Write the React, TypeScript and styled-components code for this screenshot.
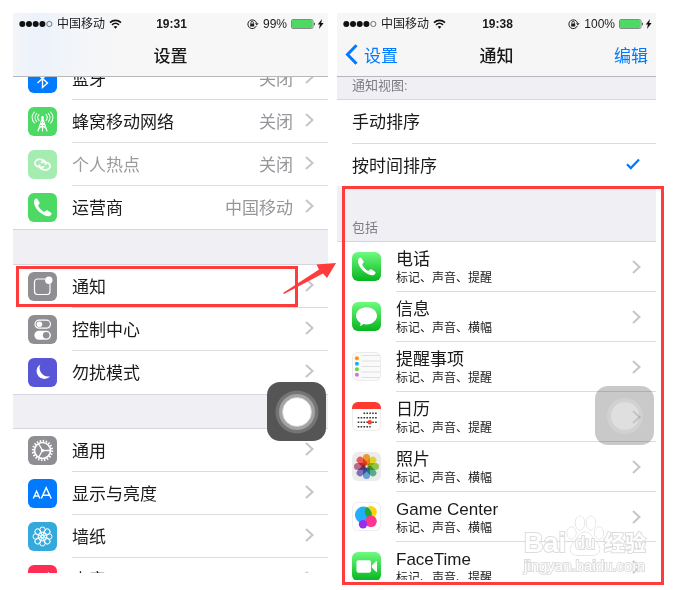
import React from "react";
import styled, { createGlobalStyle } from "styled-components";

const sans = `"Liberation Sans", "Noto Sans CJK SC", sans-serif`;
const blue = "#007aff";
const red = "#ff3b3b";

const GlobalStyle = createGlobalStyle`
  *, *::before, *::after { box-sizing: border-box; }
  body { margin: 0; background: #fff; font-family: ${sans}; color: #1a1a1a; }
  a { color: inherit; text-decoration: none; }
  button { font: inherit; border: 0; background: none; padding: 0; cursor: pointer; }
`;

const Page = styled.main`
  display: grid;
  grid-template-columns: 315fr 319fr;
  align-items: start;
  gap: 9px;
  padding: 13px 28px 5px 13px;
`;

const Phone = styled.section`
  position: relative;
  min-width: 0;
  background: #fff;
`;

const Header = styled.header<{ $tinted?: boolean }>`
  position: relative;
  z-index: 1;
  height: 64px;
  border-bottom: 1px solid #b8b8bc;
  background: ${(p) =>
    p.$tinted ? "linear-gradient(90deg, #f3f5f9 0, #ecf2fb 24px, #f3f5f9 60px, #f7f7f7 110px)" : "#f6f6f6"};
`;

const StatusBar = styled.div`
  display: grid;
  grid-template-columns: 1fr auto 1fr;
  align-items: center;
  height: 21px;
  padding: 0 4px 0 6px;
  font-size: 12px;
  line-height: 20px;
  white-space: nowrap;
`;

const StatusGroup = styled.div<{ $end?: boolean }>`
  display: flex;
  align-items: center;
  justify-content: ${(p) => (p.$end ? "flex-end" : "flex-start")};
  gap: 4px;
`;

const Clock = styled.time`
  font-weight: 700;
`;

const NavBar = styled.div`
  display: grid;
  grid-template-columns: 1fr auto 1fr;
  align-items: center;
  height: 40px;
  padding: 0 8px;
  font-size: 17px;
`;

const Title = styled.h1`
  grid-column: 2;
  margin: 0;
  font-size: 17px;
  font-weight: 500;
`;

const BackLink = styled.a`
  display: flex;
  align-items: center;
  gap: 6px;
  color: ${blue};
`;

const EditButton = styled.button`
  justify-self: end;
  color: ${blue};
`;

const Content = styled.div<{ $max: number }>`
  max-height: ${(p) => p.$max}px;
  overflow: hidden;
`;

const List = styled.ul<{ $scrolled?: boolean }>`
  list-style: none;
  margin: ${(p) => (p.$scrolled ? "-20px" : "0")} 0 0;
  padding: 0;
`;

const Item = styled.li`
  position: relative;
`;

const Row = styled.a<{ $dim?: boolean }>`
  display: flex;
  align-items: center;
  height: 43px;
  padding-left: 15px;
  gap: 15px;
  color: ${(p) => (p.$dim ? "#9b9b9f" : "#1a1a1a")};
  > svg { flex: none; }
`;

const RowBody = styled.span<{ $last?: boolean }>`
  flex: 1;
  display: flex;
  align-items: center;
  align-self: stretch;
  gap: 12px;
  padding: 0 14px 2px 0;
  border-bottom: 1px solid ${(p) => (p.$last ? "transparent" : "#dcdce0")};
  font-size: 17px;
`;

const Label = styled.span`
  flex: 1;
`;

const Value = styled.span`
  color: #96969b;
`;

const Gap = styled.div<{ $height: number }>`
  height: ${(p) => p.$height}px;
  background: #efeff4;
  border: solid #d6d6dc;
  border-width: 1px 0;
`;

const Heading = styled.h2<{ $height: number }>`
  display: flex;
  align-items: flex-end;
  height: ${(p) => p.$height}px;
  margin: 0;
  padding: 0 15px 5px;
  background: #efeff4;
  border-bottom: 1px solid #d6d6dc;
  color: #7c7c82;
  font-size: 13px;
  font-weight: 400;
  line-height: 16px;
`;

const Options = styled.fieldset`
  margin: 0;
  padding: 0 0 0 15px;
  border: 0;
`;

const Option = styled.label`
  display: flex;
  align-items: center;
  justify-content: space-between;
  height: 43px;
  padding: 0 16px 2px 0;
  font-size: 17px;
  & + & { border-top: 1px solid #dcdce0; }
  svg { visibility: hidden; }
  input:checked ~ svg { visibility: visible; }
`;

const HiddenRadio = styled.input`
  appearance: none;
  width: 0;
  height: 0;
  margin: 0;
`;

const AppRow = styled(Row)`
  height: 50px;
  > svg {
    align-self: flex-start;
    margin-top: 10px;
  }
`;

const AppBody = styled(RowBody)`
  padding: 0 15px 0 0;
`;

const AppText = styled.span`
  flex: 1;
  display: flex;
  flex-direction: column;
  padding-top: 3px;
  font-size: 17px;
  line-height: 20px;
`;

const Detail = styled.small`
  font-size: 12px;
  line-height: 16px;
`;

const RowHighlight = styled.span`
  position: absolute;
  inset: 1px 30px 1px 3px;
  border: 3px solid ${red};
  pointer-events: none;
`;

const SectionHighlight = styled.div`
  position: absolute;
  inset: 173px -8px -5px 5px;
  border: 3px solid ${red};
  pointer-events: none;
`;

const Arrow = styled.svg`
  position: absolute;
  z-index: 2;
  top: 249px;
  right: -9px;
`;

const Assistive = styled.button<{ $faded?: boolean }>`
  position: absolute;
  z-index: 2;
  top: ${(p) => (p.$faded ? 373 : 369)}px;
  right: 2px;
  display: grid;
  place-items: center;
  width: 59px;
  height: 59px;
  border-radius: 13px;
  background: ${(p) => (p.$faded ? "rgba(40,40,40,.25)" : "#555")};
`;

const Watermark = styled.div`
  position: absolute;
  right: 8px;
  bottom: 6px;
  width: 124px;
  color: #fff;
  -webkit-text-stroke: 2px #dadada;
  paint-order: stroke fill;
  opacity: .9;
  pointer-events: none;
`;

const Brand = styled.div`
  display: flex;
  align-items: flex-end;
  font-weight: 700;
  line-height: 28px;
`;

const BrandWord = styled.span<{ $small?: boolean }>`
  font-size: ${(p) => (p.$small ? 21 : 27)}px;
`;

const Paw = styled.span`
  display: grid;
  place-items: end center;
  width: 38px;
  height: 42px;
  font-size: 18px;
  font-weight: 400;
  > * { grid-area: 1 / 1; }
`;

const Site = styled.div`
  font-size: 15px;
  line-height: 17px;
`;

const Tile = ({ fill, children }: { fill: string; children?: React.ReactNode }) => (
  <svg width="29" height="29" viewBox="0 0 29 29" aria-hidden="true">
    <rect width="29" height="29" rx="6" fill={fill} />
    {children}
  </svg>
);

const Chevron = () => (
  <svg width="9" height="14" viewBox="0 0 9 14" fill="none" stroke="#c5c5ca" strokeWidth="2" aria-hidden="true">
    <path d="M1 1l6.500 6L1 13" />
  </svg>
);

const handset =
  "M6.300 7.100c1-1.600 2.300-2 3-1.200l2.200 3.400c.5.800.1 1.600-.9 2.500-.5.600-.4 1.100.1 1.900 1.100 1.900 2.700 3.500 4.700 4.700.8.500 1.300.5 1.800-.1.900-1 1.600-1.200 2.500-.7l3.300 2.100c1 .700.7 1.900-.9 3-1.700 1.100-4.200.6-7.100-1.100-3.300-1.900-6-4.700-7.600-7.700-1.500-2.700-1.900-5.200-1.100-6.800z";

const BluetoothIcon = () => (
  <Tile fill={blue}>
    <path d="M9.500 10l10 9-5 4.500v-18l5 4.500-10 9" fill="none" stroke="#fff" strokeWidth="1.400" />
  </Tile>
);

const CellularIcon = () => (
  <Tile fill="#4cd964">
    <g fill="none" stroke="#fff" strokeWidth="1.100" strokeLinecap="round">
      <path d="M14.500 10.500L10 24m4.500-13.500L19 24M12.500 16.500h4M11.500 20h6M12.500 16.500l5.500 5m-1.500-5L11 21.500M14.500 11v13" />
      <path d="M11 7.500c-1.500 1.700-1.500 4.300 0 6M18 7.500c1.500 1.700 1.500 4.300 0 6M8.700 6.300c-2.200 2.400-2.200 6 0 8.400M20.300 6.300c2.200 2.400 2.200 6 0 8.400M6.400 5c-3 3.300-3 7.700 0 11M22.600 5c3 3.300 3 7.700 0 11" />
    </g>
    <circle cx="14.500" cy="10.500" r="1.400" fill="#fff" />
  </Tile>
);

const HotspotIcon = () => (
  <Tile fill="#a5ecb1">
    <g fill="none" stroke="#fff" strokeWidth="1.700" strokeLinecap="round">
      <path d="M15.500 16.800c-1.300.6-3 .6-4.600.1-2.700-.8-4.400-2.800-3.800-4.900.7-2.300 3.800-3.300 6.600-2.400 2.600.8 4.200 2.700 3.800 4.600" />
      <path d="M13.500 12.400c1.300-.6 3-.6 4.600-.1 2.700.8 4.400 2.800 3.800 4.900-.7 2.300-3.800 3.300-6.600 2.400-2.600-.8-4.200-2.700-3.800-4.600" />
    </g>
  </Tile>
);

const PhoneIcon = () => (
  <Tile fill="#4cd964">
    <path d={handset} fill="#fff" />
  </Tile>
);

const NotifyIcon = () => (
  <Tile fill="#8e8e93">
    <path d="M17 7H9.500A3 3 0 0 0 6.500 10v9.500a3 3 0 0 0 3 3H19a3 3 0 0 0 3-3V12" fill="none" stroke="#fff" strokeWidth="1.200" />
    <circle cx="20.800" cy="8.300" r="3.700" fill="#fff" />
  </Tile>
);

const ControlIcon = () => (
  <Tile fill="#8e8e93">
    <rect x="7" y="5.200" width="15.500" height="8" rx="4" fill="none" stroke="#fff" strokeWidth="1.200" />
    <circle cx="11.400" cy="9.200" r="2.800" fill="#fff" />
    <rect x="6.400" y="15.700" width="16.500" height="9" rx="4.500" fill="#fff" />
    <circle cx="18.200" cy="20.200" r="3.300" fill="#8e8e93" />
  </Tile>
);

const MoonIcon = () => (
  <Tile fill="#5856d6">
    <path d="M12.300 6.500A7.800 7.800 0 1 0 22.300 18.200 8.600 8.600 0 0 1 12.300 6.500z" fill="#fff" />
  </Tile>
);

const GearIcon = () => (
  <Tile fill="#8e8e93">
    <g fill="none" stroke="#fff">
      <circle cx="14.500" cy="14.500" r="9.700" strokeWidth="2" strokeDasharray="1.500 1.540" />
      <circle cx="14.500" cy="14.500" r="8" strokeWidth="1.700" />
      <path d="M14.500 14.500h8M14.500 14.500l-4-7M14.500 14.500l-4 7" strokeWidth="1.300" />
    </g>
    <circle cx="14.500" cy="14.500" r="1.600" fill="#fff" />
  </Tile>
);

const DisplayIcon = () => (
  <Tile fill={blue}>
    <g fill="none" stroke="#fff" strokeWidth="1.300">
      <path d="M5.300 19.500L8.600 12l3.300 7.500M6.500 17h4.200" />
      <path d="M13.300 19.500L18.200 8.700l5 10.800M15 16.200h6.500" strokeWidth="1.500" />
    </g>
  </Tile>
);

const WallpaperIcon = () => (
  <Tile fill="#34aadc">
    <g fill="none" stroke="#fff" strokeWidth="1">
      {[0, 45, 90, 135, 180, 225, 270, 315].map((a) => (
        <g key={a} transform={`rotate(${a} 14.500 14.500)`}>
          <circle cx="14.500" cy="7.700" r="2.700" />
          <circle cx="14.500" cy="11.700" r="1.500" strokeWidth=".8" />
        </g>
      ))}
      <circle cx="14.500" cy="14.500" r="1.400" />
    </g>
  </Tile>
);

const SoundIcon = () => (
  <Tile fill="#ff2d55">
    <path d="M8 12h5l8-5v15l-8-5H8z" fill="#fff" />
  </Tile>
);

const GreenDefs = ({ id }: { id: string }) => (
  <defs>
    <linearGradient id={id} x1="0" y1="0" x2="0" y2="1">
      <stop offset="0" stopColor="#6dfc7f" />
      <stop offset="1" stopColor="#07b41e" />
    </linearGradient>
  </defs>
);

const CallApp = () => (
  <Tile fill="url(#green-call)">
    <GreenDefs id="green-call" />
    <path d={handset} fill="#fff" />
  </Tile>
);

const MessageApp = () => (
  <Tile fill="url(#green-message)">
    <GreenDefs id="green-message" />
    <path d="M14.500 5.200c5.900 0 10.500 3.800 10.500 8.600s-4.600 8.600-10.500 8.600c-1.100 0-2.200-.1-3.200-.4-1 1-2.200 1.700-3.700 1.900.8-.9 1.100-1.900 1-3C5.800 19.300 4 16.700 4 13.800c0-4.800 4.600-8.600 10.500-8.600z" fill="#fff" />
  </Tile>
);

const ReminderApp = () => (
  <Tile fill="#e6e6e6">
    <rect x=".7" y=".7" width="27.600" height="27.600" rx="5.500" fill="#fafafa" />
    <path d="M9.500 3.500H28M9.500 9H28M9.500 14.500H28M9.500 20H28M9.500 25.500H28" stroke="#e0e0e0" />
    {["#ff9500", "#1badf8", "#63da38", "#cc73e1"].map((c, i) => (
      <circle key={c} cx="4.900" cy={6.2 + i * 5.5} r="2" fill={c} />
    ))}
  </Tile>
);

const CalendarApp = () => (
  <Tile fill="#e6e6e6">
    <rect x=".7" y=".7" width="27.600" height="27.600" rx="5.500" fill="#fff" />
    <path d="M0 7V6a6 6 0 0 1 6-6h17a6 6 0 0 1 6 6v1z" fill="#ff3b30" />
    <g stroke="#333" strokeWidth="1.400" strokeDasharray="1.600 1.300">
      <path d="M11.500 11.300h13.500M5.700 15.700H25M5.700 20.200H25M5.700 24.700h13" />
    </g>
    <circle cx="17.800" cy="20.200" r="2.200" fill="#ff3b30" />
  </Tile>
);

const Petal = styled.rect`
  mix-blend-mode: multiply;
`;

const PhotosApp = () => (
  <Tile fill="#ececec">
    {["#ff9a1c", "#efe01c", "#94d03d", "#4fb08c", "#5da4e3", "#7d6bc0", "#c0628f", "#ff5048"].map((c, i) => (
      <Petal
        key={c}
        x="11"
        y="2"
        width="7"
        height="11.500"
        rx="3.500"
        fill={c}
        opacity=".9"
        transform={`rotate(${i * 45} 14.500 14.500)`}
      />
    ))}
  </Tile>
);

const GameApp = () => (
  <Tile fill="#eaeaea">
    <rect x=".7" y=".7" width="27.600" height="27.600" rx="5.500" fill="#fff" />
    <circle cx="18.800" cy="10" r="6" fill="#f9d312" />
    <circle cx="11.500" cy="13" r="8.500" fill="#20aff8" />
    <path d="M15.200 5.300a8.500 8.500 0 0 1 3.600 10.700 6 6 0 0 1-5.900-7.200 6 6 0 0 1 2.300-3.500z" fill="#27a72d" />
    <circle cx="19" cy="19.300" r="5.800" fill="#ff3590" />
    <circle cx="11" cy="22.300" r="4.200" fill="#9a2cf0" />
  </Tile>
);

const FaceTimeApp = () => (
  <Tile fill="url(#green-face)">
    <GreenDefs id="green-face" />
    <rect x="4.500" y="8.300" width="14.500" height="12.500" rx="2" fill="#fff" />
    <path d="M19.800 13.500l4.200-4.200c.5-.5 1-.3 1 .4v9.700c0 .7-.5.900-1 .4l-4.200-4.200z" fill="#fff" />
  </Tile>
);

const Signal = () => (
  <svg width="34" height="8" viewBox="0 0 34 8" aria-hidden="true">
    {[3.3, 10, 16.7, 23.4].map((x) => (
      <circle key={x} cx={x} cy="4" r="3" fill="#111" />
    ))}
    <circle cx="30.300" cy="4" r="2.600" fill="none" stroke="#555" strokeWidth=".8" />
  </svg>
);

const Wifi = () => (
  <svg width="13" height="10" viewBox="0 0 13 10" fill="none" stroke="#111" strokeWidth="1.600" aria-hidden="true">
    <path d="M1 3.600c3.200-3 7.800-3 11 0M3 5.800c2.100-1.900 4.900-1.900 7 0" />
    <path d="M6.500 9.700L4.700 7.800c1.100-1 2.500-1 3.600 0z" fill="#111" stroke="none" />
  </svg>
);

const Lock = () => (
  <svg width="12" height="10" viewBox="0 0 12 10" fill="none" aria-hidden="true">
    <path d="M9.300 7A4.400 4.400 0 1 1 9.500 4" stroke="#222" strokeWidth="1" />
    <path d="M8 4.300h3.600L9.800 6.600z" fill="#222" />
    <path d="M3.200 4.500h4v3h-4z" fill="#222" />
    <path d="M4 4.600V3.500a1.200 1.200 0 0 1 2.400 0v1.100" stroke="#222" strokeWidth=".9" />
  </svg>
);

const Battery = () => (
  <svg width="33" height="10" viewBox="0 0 33 10" aria-hidden="true">
    <rect x=".5" y=".5" width="21.500" height="9" rx="1.500" fill="#fff" stroke="#888" />
    <rect x="1" y="1" width="20.500" height="8" rx="1" fill="#4cd964" />
    <path d="M22.800 3.300c1.600.4 1.600 3 0 3.400z" fill="#444" />
    <path d="M31 0L26.800 5.600h2.100L28 10l4.600-5.900h-2.400z" fill="#111" />
  </svg>
);

const Status = ({ time, level }: { time: string; level: string }) => (
  <StatusBar>
    <StatusGroup>
      <Signal />
      <span>中国移动</span>
      <Wifi />
    </StatusGroup>
    <Clock>{time}</Clock>
    <StatusGroup $end>
      <Lock />
      <span>{level}</span>
      <Battery />
    </StatusGroup>
  </StatusBar>
);

type Entry = {
  icon: React.ReactNode;
  label: string;
  value?: string;
  dim?: boolean;
  marked?: boolean;
};

const network: Entry[] = [
  { icon: <BluetoothIcon />, label: "蓝牙", value: "关闭" },
  { icon: <CellularIcon />, label: "蜂窝移动网络", value: "关闭" },
  { icon: <HotspotIcon />, label: "个人热点", value: "关闭", dim: true },
  { icon: <PhoneIcon />, label: "运营商", value: "中国移动" },
];

const alerts: Entry[] = [
  { icon: <NotifyIcon />, label: "通知", marked: true },
  { icon: <ControlIcon />, label: "控制中心" },
  { icon: <MoonIcon />, label: "勿扰模式" },
];

const general: Entry[] = [
  { icon: <GearIcon />, label: "通用" },
  { icon: <DisplayIcon />, label: "显示与亮度" },
  { icon: <WallpaperIcon />, label: "墙纸" },
  { icon: <SoundIcon />, label: "声音" },
];

const apps = [
  { icon: <CallApp />, name: "电话", detail: "标记、声音、提醒" },
  { icon: <MessageApp />, name: "信息", detail: "标记、声音、横幅" },
  { icon: <ReminderApp />, name: "提醒事项", detail: "标记、声音、提醒" },
  { icon: <CalendarApp />, name: "日历", detail: "标记、声音、提醒" },
  { icon: <PhotosApp />, name: "照片", detail: "标记、声音、横幅" },
  { icon: <GameApp />, name: "Game Center", detail: "标记、声音、横幅" },
  { icon: <FaceTimeApp />, name: "FaceTime", detail: "标记、声音、提醒" },
];

const SettingsList = ({ entries, scrolled }: { entries: Entry[]; scrolled?: boolean }) => (
  <List $scrolled={scrolled}>
    {entries.map((e, i) => (
      <Item key={e.label}>
        <Row href="#" $dim={e.dim}>
          {e.icon}
          <RowBody $last={i === entries.length - 1}>
            <Label>{e.label}</Label>
            {e.value && <Value>{e.value}</Value>}
            <Chevron />
          </RowBody>
        </Row>
        {e.marked && <RowHighlight />}
      </Item>
    ))}
  </List>
);

const Tick = () => (
  <svg width="14" height="12" viewBox="0 0 14 12" fill="none" stroke={blue} strokeWidth="2.200" aria-hidden="true">
    <path d="M1 6.200l3.800 3.900L13 1.500" />
  </svg>
);

export default function App() {
  return (
    <>
      <GlobalStyle />
      <Page>
        <Phone>
          <Header $tinted>
            <Status time="19:31" level="99%" />
            <NavBar>
              <Title>设置</Title>
            </NavBar>
          </Header>
          <Content $max={496}>
            <SettingsList entries={network} scrolled />
            <Gap $height={36} />
            <SettingsList entries={alerts} />
            <Gap $height={35} />
            <SettingsList entries={general} />
          </Content>
          <Arrow width="55" height="34" viewBox="0 0 55 34" aria-hidden="true">
            <path d="M1 31L37 7.500 34.500 2.500 54 1 45 16l-4-4.500L2 32z" fill={red} />
          </Arrow>
          <Assistive aria-label="AssistiveTouch">
            <svg width="44" height="44" viewBox="0 0 44 44" aria-hidden="true">
              <circle cx="22" cy="22" r="21.500" fill="#747474" />
              <circle cx="22" cy="22" r="18" fill="#a3a3a3" />
              <circle cx="22" cy="22" r="14.500" fill="#fff" stroke="#ccc" strokeWidth=".8" />
            </svg>
          </Assistive>
        </Phone>

        <Phone>
          <Header>
            <Status time="19:38" level="100%" />
            <NavBar>
              <BackLink href="#">
                <svg width="13" height="21" viewBox="0 0 13 21" fill="none" stroke={blue} strokeWidth="3" aria-hidden="true">
                  <path d="M11.500 1.200L2.500 10.500l9 9.300" />
                </svg>
                设置
              </BackLink>
              <Title>通知</Title>
              <EditButton>编辑</EditButton>
            </NavBar>
          </Header>
          <Content $max={503}>
            <Heading $height={23}>通知视图:</Heading>
            <Options aria-label="通知视图">
              <Option>
                手动排序
                <HiddenRadio type="radio" name="sort" />
                <Tick />
              </Option>
              <Option>
                按时间排序
                <HiddenRadio type="radio" name="sort" defaultChecked />
                <Tick />
              </Option>
            </Options>
            <Heading $height={56}>包括</Heading>
            <List>
              {apps.map((app) => (
                <Item key={app.name}>
                  <AppRow href="#">
                    {app.icon}
                    <AppBody>
                      <AppText>
                        {app.name}
                        <Detail>{app.detail}</Detail>
                      </AppText>
                      <Chevron />
                    </AppBody>
                  </AppRow>
                </Item>
              ))}
            </List>
          </Content>
          <SectionHighlight />
          <Assistive $faded aria-label="AssistiveTouch">
            <svg width="44" height="44" viewBox="0 0 44 44" fill="#fff" aria-hidden="true">
              <circle cx="22" cy="22" r="18" opacity=".15" />
              <circle cx="22" cy="22" r="14" opacity=".3" />
            </svg>
          </Assistive>
          <Watermark>
            <Brand>
              <BrandWord>Bai</BrandWord>
              <Paw>
                <svg width="38" height="42" viewBox="0 0 38 42" fill="#fff" fillOpacity=".8" stroke="#d2d2d2" aria-hidden="true">
                  <ellipse cx="5.500" cy="18" rx="4.500" ry="6" />
                  <ellipse cx="14" cy="8" rx="4.700" ry="7" />
                  <ellipse cx="25" cy="8" rx="4.700" ry="7" />
                  <ellipse cx="33" cy="18" rx="4.500" ry="6" />
                  <path d="M19 17c5 0 6 4 9.500 8 4 4.500 6 7 5 11-1 4-5 4.500-14.500 4.500S5.500 40 4.500 36c-1-4 1-6.500 5-11C13 21 14 17 19 17z" />
                </svg>
                <span>du</span>
              </Paw>
              <BrandWord $small>经验</BrandWord>
            </Brand>
            <Site>jingyan.baidu.com</Site>
          </Watermark>
        </Phone>
      </Page>
    </>
  );
}
